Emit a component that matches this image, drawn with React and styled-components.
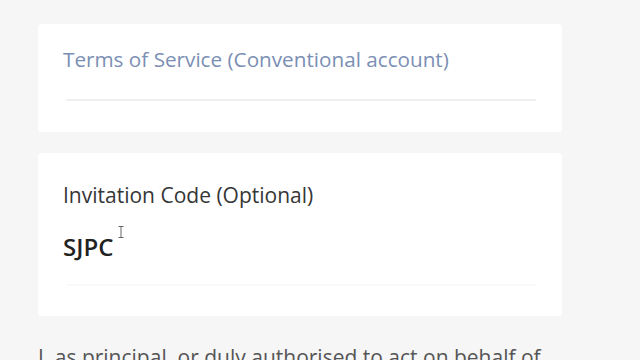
import React from "react";
import styled, { createGlobalStyle } from "styled-components";

const Global = createGlobalStyle`
  html, body { margin: 0; padding: 0; background: #f6f6f7; }
  body { font-family: "Open Sans", "Noto Sans", sans-serif; overflow: hidden; }
`;

const Page = styled.div`
  width: 640px;
  height: 360px;
  box-sizing: border-box;
  padding: 24px 78px 0 38px;
  display: flex;
  flex-direction: column;
  gap: 21px;
  overflow: hidden;
  background: #f6f6f7;
`;

const Card = styled.section`
  flex-shrink: 0;
  background: #ffffff;
  border-radius: 4px;
  box-sizing: border-box;
  height: ${(p) => p.$h}px;
  padding: ${(p) => p.$pt}px 26px 0 25px;
  display: flex;
  flex-direction: column;
`;

const LinkText = styled.div`
  font-size: 20.7px;
  line-height: 28px;
  color: #7b8fb4;
  white-space: nowrap;
`;

const Label = styled.div`
  font-size: 21px;
  line-height: 28px;
  color: #363636;
  white-space: nowrap;
`;

const Divider = styled.div`
  height: 2px;
  margin: ${(p) => p.$mt}px 0 0 3px;
  background: ${(p) => p.$c};
`;

const InputRow = styled.div`
  position: relative;
  margin-top: 23px;
  display: flex;
  align-items: center;
  height: 30px;
`;

const Value = styled.span`
  font-size: 24px;
  line-height: 30px;
  font-weight: 600;
  color: #222;
`;

const Cursor = styled.svg`
  position: absolute;
  left: 55px;
  top: -6px;
`;

const Body = styled.p`
  flex-shrink: 0;
  margin: 6px 0 0 0;
  font-size: 21px;
  line-height: 28px;
  color: #555;
  white-space: nowrap;
`;

export default function App() {
  return (
    <>
      <Global />
      <Page>
        <Card $h={108} $pt={21}>
          <LinkText>Terms of Service (Conventional account)</LinkText>
          <Divider $mt={26} $c="#f0f0f0" />
        </Card>
        <Card $h={163} $pt={28}>
          <Label>Invitation Code (Optional)</Label>
          <InputRow>
            <Value>SJPC</Value>
            <Cursor width="6" height="12" viewBox="0 0 6 12">
              <path d="M0.5 0.5 H5.5 M3 0.5 V11.5 M0.5 11.5 H5.5" stroke="#666" strokeWidth="1" fill="none" />
            </Cursor>
          </InputRow>
          <Divider $mt={22} $c="#fafafa" />
        </Card>
        <Body>I, as principal, or duly authorised to act on behalf of</Body>
      </Page>
    </>
  );
}
